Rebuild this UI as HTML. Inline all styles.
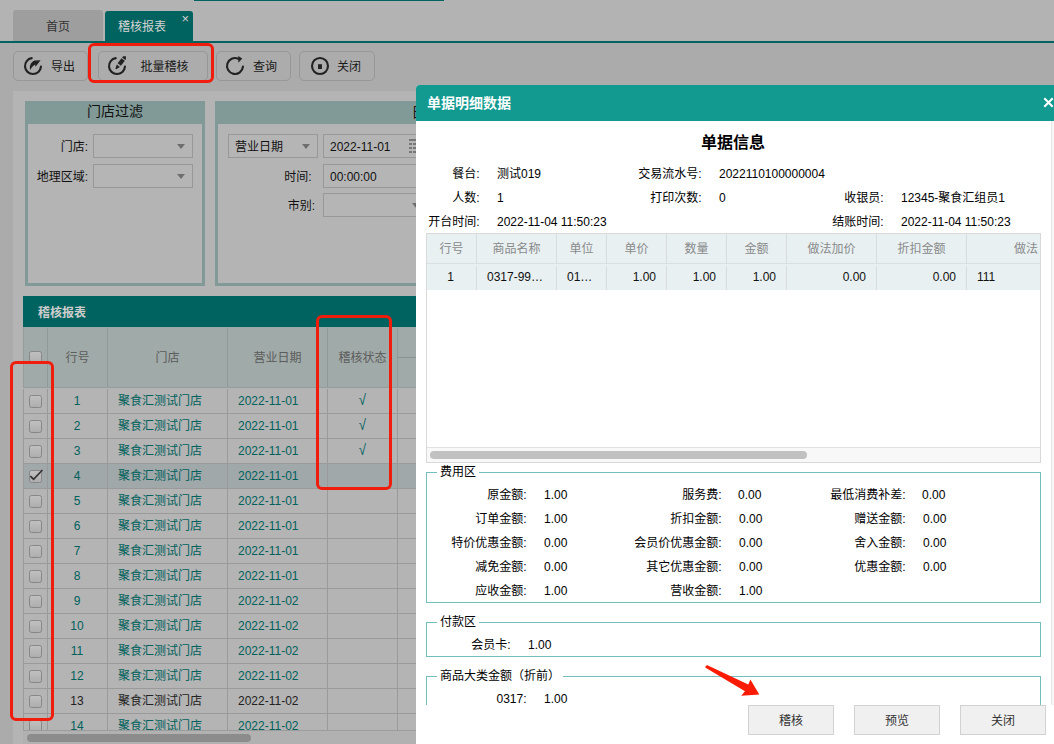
<!DOCTYPE html>
<html lang="zh-CN">
<head>
<meta charset="utf-8">
<title>稽核报表</title>
<style>
*{box-sizing:border-box;margin:0;padding:0}
html,body{width:1054px;height:744px;overflow:hidden}
body{position:relative;background:#ababab;font-family:"Liberation Sans","Noto Sans CJK SC",sans-serif;font-size:12px;color:#111;line-height:1}
.a{position:absolute}
.t{position:absolute;white-space:nowrap;line-height:16px;height:16px}
.r{text-align:right}
.c{text-align:center}
.tab{position:absolute;top:11px;height:31px;border-radius:3px 3px 0 0;text-align:center;line-height:32px;font-size:12px}
.btn{position:absolute;top:51px;height:30px;border:1px solid #979797;border-radius:5px;background:#acacac}
.btn span{position:absolute;top:7px;line-height:16px;font-size:12px;color:#1a1a1a;white-space:nowrap}
.btn svg{position:absolute;left:9px;top:3.85px}
.red{position:absolute;border:3px solid #f01d0c;border-radius:6px}
.sel{position:absolute;height:24px;border:1px solid #989898;background:#b5b5b5}
.sel i{position:absolute;right:7px;top:9px;width:0;height:0;border-left:4px solid transparent;border-right:4px solid transparent;border-top:5px solid #6e6e6e}
.fb{position:absolute;border:3px solid #819a97;background:#b4b4b4}
.fb .h{position:absolute;left:-3px;right:-3px;top:-3px;height:23px;background:#819a97;text-align:center;font-size:14px;line-height:21px;color:#111}
.row{position:absolute;left:23px;width:393px;height:25px;border-bottom:1px solid #9a9a9a;border-left:1px solid #9a9a9a;color:#00615c}
.row b{position:absolute;top:0;bottom:0;width:1px;background:#9a9a9a}
.row span{position:absolute;top:4px;line-height:16px;white-space:nowrap}
.cb{position:absolute;left:5px;top:6px;width:13px;height:13px;border:1px solid #878787;border-radius:2.5px;background:linear-gradient(#c0c0c0,#aeaeae)}
.ck{font-size:15px;transform:scaleX(.88)}
#dlg{position:absolute;left:416px;top:85px;width:638px;height:659px;background:#fff;border-radius:4px 0 0 0;overflow:hidden}
#dlg .hd{position:absolute;left:0;top:0;right:0;height:36px;background:#129990}
.k{color:#000}
.th{position:absolute;top:0;height:30px;border-right:1px solid #d8dcdd;color:#8a8a8a;line-height:30px;text-align:center}
.td{position:absolute;top:32px;height:24px;border-right:1px solid #d8dcdd;color:#111;line-height:23px}
.fs{position:absolute;left:426px;width:615px;border:1px solid #74bebc}
.lg{position:absolute;background:#fff;padding:0 3px;line-height:16px;height:16px;white-space:nowrap;color:#000}
.db{position:absolute;top:705px;width:86px;height:30px;border:1px solid #d2d2d2;background:#f0f0f0;text-align:center;line-height:30px;font-size:12px;color:#333}
</style>
</head>
<body>
<div class="a" style="left:0;top:0;width:1054px;height:42px;background:#b3b3b3"></div>
<div class="a" style="left:194px;top:0;width:249.5px;height:1.4px;background:#00635f"></div>
<div class="tab" style="left:13px;top:10px;height:32px;line-height:34px;width:90px;background:#9e9e9e;color:#333">首页</div>
<div class="tab" style="left:105px;width:88px;background:#00635f;color:#d4d4d4;padding-right:14px">稽核报表</div>
<div class="t" style="left:181.5px;top:11px;color:#d0d0d0;font-size:13px">×</div>
<div class="a" style="left:0;top:41px;width:1054px;height:2px;background:#00635f"></div>
<div class="btn" style="left:13px;width:75px"><svg width="20" height="20" viewBox="0 0 20 20"><path d="M8.75 2.1A8 8 0 1 0 17.97 10.67" fill="none" stroke="#222" stroke-width="2.1" stroke-linecap="round"/><path d="M7.2 14C6.2 10.2 7.6 6.2 11.5 4.4L17.6 4.3L12.5 10.8L12.2 8.4C10.2 9.4 8.4 11.4 7.2 14Z" fill="#222"/></svg><span style="left:37px">导出</span></div>
<div class="btn" style="left:97.5px;width:110px"><svg width="20" height="20" viewBox="0 0 20 20" style="left:8.5px"><defs><clipPath id="pc"><rect x="0" y="0.2" width="18.9" height="20"/></clipPath></defs><path d="M8.75 2.1A8 8 0 1 0 17.97 10.67" fill="none" stroke="#222" stroke-width="2.1" stroke-linecap="round"/><g clip-path="url(#pc)"><g transform="translate(8.9 12.8) rotate(-52)" fill="#222"><path d="M-0.2 -0.5L4 -2L4 2L-0.2 0.5Z"/><rect x="5.5" y="-2.1" width="6.3" height="4.2"/><rect x="12.8" y="-2.1" width="6" height="4.2"/></g></g></svg><span style="left:42px">批量稽核</span></div>
<div class="btn" style="left:215.5px;width:75.5px"><svg width="20" height="20" viewBox="0 0 20 20" style="left:8.5px"><path d="M13.25 2.69A8 8 0 1 0 17.97 10.67" fill="none" stroke="#222" stroke-width="2.1" stroke-linecap="round"/><path d="M13.2 0.1L17.3 2.6L13.4 6.7Z" fill="#222"/></svg><span style="left:36.5px">查询</span></div>
<div class="btn" style="left:299px;width:76px"><svg width="20" height="20" viewBox="0 0 20 20" style="left:10px"><circle cx="10" cy="10" r="8" fill="none" stroke="#222" stroke-width="2.1"/><rect x="8.05" y="8.2" width="3.9" height="4.8" fill="#222"/></svg><span style="left:37px">关闭</span></div>
<div class="red" style="left:88px;top:42.5px;width:126px;height:40.5px"></div>
<div class="a" style="left:13px;top:91px;width:1041px;height:653px;background:#b4b4b4"></div>
<div class="fb" style="left:25px;top:101px;width:180px;height:185px"><div class="h">门店过滤</div></div>
<div class="fb" style="left:215px;top:101px;width:400px;height:185px"><div class="h" style="text-align:left;padding-left:196.5px;line-height:22px">日</div></div>
<div class="t r" style="left:30px;width:58px;top:139px">门店:</div>
<div class="sel" style="left:93px;top:134px;width:100px"><i></i></div>
<div class="t r" style="left:30px;width:58px;top:169px">地理区域:</div>
<div class="sel" style="left:93px;top:164px;width:100px"><i></i></div>
<div class="sel" style="left:228px;top:134px;width:90px"><i style="right:7.5px"></i></div>
<div class="t" style="left:235px;top:139px">营业日期</div>
<div class="sel" style="left:323px;top:134px;width:100px"></div>
<div class="t" style="left:330px;top:139px">2022-11-01</div>
<svg class="a" style="left:409px;top:139px" width="12" height="14" viewBox="0 0 12 14"><g fill="#777"><rect x="0" y="0" width="12" height="2"/><rect x="0" y="4" width="3" height="2"/><rect x="4" y="4" width="3" height="2"/><rect x="8" y="4" width="3" height="2"/><rect x="0" y="8" width="3" height="2"/><rect x="4" y="8" width="3" height="2"/><rect x="8" y="8" width="3" height="2"/><rect x="0" y="12" width="3" height="2"/><rect x="4" y="12" width="3" height="2"/></g></svg>
<div class="t r" style="left:250px;width:61.5px;top:168.5px">时间:</div>
<div class="sel" style="left:323px;top:164px;width:100px"></div>
<div class="t" style="left:330px;top:169px">00:00:00</div>
<div class="t r" style="left:250px;width:65px;top:197.5px">市别:</div>
<div class="sel" style="left:323px;top:193px;width:106px"><i style="right:8.5px"></i></div>
<div class="a" style="left:23px;top:296px;width:400px;height:31px;background:#00635f"></div>
<div class="t" style="left:38px;top:304.5px;color:#cdcdcd;font-weight:bold">稽核报表</div>
<div class="a" style="left:23px;top:327px;width:400px;height:61px;background:#a0aaa8;border-bottom:1px solid #959c9b;border-left:1px solid #959c9b"></div>
<div class="a" style="left:47px;top:328px;width:1px;height:59px;background:#909a98"></div>
<div class="a" style="left:107px;top:328px;width:1px;height:59px;background:#909a98"></div>
<div class="a" style="left:227px;top:328px;width:1px;height:59px;background:#909a98"></div>
<div class="a" style="left:327px;top:328px;width:1px;height:59px;background:#909a98"></div>
<div class="a" style="left:397px;top:328px;width:1px;height:59px;background:#909a98"></div>
<div class="a" style="left:398px;top:357px;width:25px;height:1px;background:#8a9492"></div>
<div class="cb" style="left:29px;top:351px"></div>
<div class="t c" style="left:48px;width:59px;top:350px;color:#5c5c5c">行号</div>
<div class="t c" style="left:108px;width:119px;top:350px;color:#5c5c5c">门店</div>
<div class="t c" style="left:228px;width:99px;top:350px;color:#5c5c5c">营业日期</div>
<div class="t c" style="left:328px;width:69px;top:350px;color:#5c5c5c">稽核状态</div>
<div class="row" style="top:389px;"><div class="cb"></div><b style="left:23px"></b><b style="left:83px"></b><b style="left:203px"></b><b style="left:303px"></b><b style="left:373px"></b><span style="left:24px;width:58px;text-align:center">1</span><span style="left:94px">聚食汇测试门店</span><span style="left:214px">2022-11-01</span><span class="ck" style="top:3px;left:304px;width:69px;text-align:center">√</span></div>
<div class="row" style="top:414px;"><div class="cb"></div><b style="left:23px"></b><b style="left:83px"></b><b style="left:203px"></b><b style="left:303px"></b><b style="left:373px"></b><span style="left:24px;width:58px;text-align:center">2</span><span style="left:94px">聚食汇测试门店</span><span style="left:214px">2022-11-01</span><span class="ck" style="top:3px;left:304px;width:69px;text-align:center">√</span></div>
<div class="row" style="top:439px;"><div class="cb"></div><b style="left:23px"></b><b style="left:83px"></b><b style="left:203px"></b><b style="left:303px"></b><b style="left:373px"></b><span style="left:24px;width:58px;text-align:center">3</span><span style="left:94px">聚食汇测试门店</span><span style="left:214px">2022-11-01</span><span class="ck" style="top:3px;left:304px;width:69px;text-align:center">√</span></div>
<div class="row" style="top:464px;background:#a1a8aa;"><div class="cb"><svg style="position:absolute;left:0px;top:-2px" width="14" height="14" viewBox="0 0 14 14"><path d="M0.4 7.1L3.6 10.3L12.4 1" fill="none" stroke="#333" stroke-width="1.7"/></svg></div><b style="left:23px"></b><b style="left:83px"></b><b style="left:203px"></b><b style="left:303px"></b><b style="left:373px"></b><span style="left:24px;width:58px;text-align:center">4</span><span style="left:94px">聚食汇测试门店</span><span style="left:214px">2022-11-01</span></div>
<div class="row" style="top:489px;"><div class="cb"></div><b style="left:23px"></b><b style="left:83px"></b><b style="left:203px"></b><b style="left:303px"></b><b style="left:373px"></b><span style="left:24px;width:58px;text-align:center">5</span><span style="left:94px">聚食汇测试门店</span><span style="left:214px">2022-11-01</span></div>
<div class="row" style="top:514px;"><div class="cb"></div><b style="left:23px"></b><b style="left:83px"></b><b style="left:203px"></b><b style="left:303px"></b><b style="left:373px"></b><span style="left:24px;width:58px;text-align:center">6</span><span style="left:94px">聚食汇测试门店</span><span style="left:214px">2022-11-01</span></div>
<div class="row" style="top:539px;"><div class="cb"></div><b style="left:23px"></b><b style="left:83px"></b><b style="left:203px"></b><b style="left:303px"></b><b style="left:373px"></b><span style="left:24px;width:58px;text-align:center">7</span><span style="left:94px">聚食汇测试门店</span><span style="left:214px">2022-11-01</span></div>
<div class="row" style="top:564px;"><div class="cb"></div><b style="left:23px"></b><b style="left:83px"></b><b style="left:203px"></b><b style="left:303px"></b><b style="left:373px"></b><span style="left:24px;width:58px;text-align:center">8</span><span style="left:94px">聚食汇测试门店</span><span style="left:214px">2022-11-01</span></div>
<div class="row" style="top:589px;"><div class="cb"></div><b style="left:23px"></b><b style="left:83px"></b><b style="left:203px"></b><b style="left:303px"></b><b style="left:373px"></b><span style="left:24px;width:58px;text-align:center">9</span><span style="left:94px">聚食汇测试门店</span><span style="left:214px">2022-11-02</span></div>
<div class="row" style="top:614px;"><div class="cb"></div><b style="left:23px"></b><b style="left:83px"></b><b style="left:203px"></b><b style="left:303px"></b><b style="left:373px"></b><span style="left:24px;width:58px;text-align:center">10</span><span style="left:94px">聚食汇测试门店</span><span style="left:214px">2022-11-02</span></div>
<div class="row" style="top:639px;"><div class="cb"></div><b style="left:23px"></b><b style="left:83px"></b><b style="left:203px"></b><b style="left:303px"></b><b style="left:373px"></b><span style="left:24px;width:58px;text-align:center">11</span><span style="left:94px">聚食汇测试门店</span><span style="left:214px">2022-11-02</span></div>
<div class="row" style="top:664px;"><div class="cb"></div><b style="left:23px"></b><b style="left:83px"></b><b style="left:203px"></b><b style="left:303px"></b><b style="left:373px"></b><span style="left:24px;width:58px;text-align:center">12</span><span style="left:94px">聚食汇测试门店</span><span style="left:214px">2022-11-02</span></div>
<div class="row" style="top:689px;color:#222;"><div class="cb"></div><b style="left:23px"></b><b style="left:83px"></b><b style="left:203px"></b><b style="left:303px"></b><b style="left:373px"></b><span style="left:24px;width:58px;text-align:center">13</span><span style="left:94px">聚食汇测试门店</span><span style="left:214px">2022-11-02</span></div>
<div class="row" style="top:714px;"><div class="cb"></div><b style="left:23px"></b><b style="left:83px"></b><b style="left:203px"></b><b style="left:303px"></b><b style="left:373px"></b><span style="left:24px;width:58px;text-align:center">14</span><span style="left:94px">聚食汇测试门店</span><span style="left:214px">2022-11-02</span></div>
<div class="a" style="left:23px;top:730px;width:400px;height:14px;background:#b1b1b1;border-top:1px solid #9c9c9c"></div>
<div class="a" style="left:27px;top:734px;width:224px;height:8px;border-radius:4px;background:#8c8c8c"></div>
<div class="red" style="left:10.3px;top:361px;width:43.6px;height:360px"></div>
<div class="red" style="left:316.2px;top:314.5px;width:76px;height:175.5px"></div>
<div id="dlg"><div class="hd"></div></div>
<div class="t" style="left:427px;top:95px;font-size:14px;font-weight:bold;color:#fff">单据明细数据</div>
<svg class="a" style="left:1043px;top:97px" width="11" height="11" viewBox="0 0 11 11"><path d="M1.3 1.3L9.7 9.7M9.7 1.3L1.3 9.7" stroke="#fff" stroke-width="2.1" fill="none"/></svg>
<div class="a" style="left:1051px;top:121px;width:3px;height:584px;background:#f6f6f6;border-left:1px solid #e6e6e6"></div>
<div class="t c k" style="left:633px;width:200px;top:133px;height:20px;line-height:20px;font-size:16px;font-weight:bold">单据信息</div>
<div class="t r k" style="left:349.5px;width:130px;top:165.5px">餐台:</div>
<div class="t k" style="left:497px;top:165.5px">测试019</div>
<div class="t r k" style="left:571.5px;width:130px;top:165.5px">交易流水号:</div>
<div class="t k" style="left:719px;top:165.5px">2022110100000004</div>
<div class="t r k" style="left:349.5px;width:130px;top:189.5px">人数:</div>
<div class="t k" style="left:497px;top:189.5px">1</div>
<div class="t r k" style="left:571.5px;width:130px;top:189.5px">打印次数:</div>
<div class="t k" style="left:719px;top:189.5px">0</div>
<div class="t r k" style="left:753.5px;width:130px;top:189.5px">收银员:</div>
<div class="t k" style="left:901px;top:189.5px">12345-聚食汇组员1</div>
<div class="t r k" style="left:349.5px;width:130px;top:213.5px">开台时间:</div>
<div class="t k" style="left:497px;top:213.5px">2022-11-04 11:50:23</div>
<div class="t r k" style="left:753.5px;width:130px;top:213.5px">结账时间:</div>
<div class="t k" style="left:901px;top:213.5px">2022-11-04 11:50:23</div>
<div class="a" style="left:426px;top:233px;width:615px;height:230px;border:1px solid #d9d9d9;overflow:hidden"><div class="a" style="left:0;top:0;width:613px;height:30px;background:#e8f0f2;border-bottom:1px solid #dcdfe0"></div><div class="a" style="left:0;top:30px;width:613px;height:26px;background:#e8f0f2"></div><div class="th" style="left:0px;width:50px">行号</div><div class="td" style="left:0px;width:50px;text-align:center;padding-right:2px">1</div><div class="th" style="left:50px;width:80px">商品名称</div><div class="td" style="left:50px;width:80px;text-align:left;padding-left:10px">0317-99…</div><div class="th" style="left:130px;width:50px">单位</div><div class="td" style="left:130px;width:50px;text-align:left;padding-left:10px">01…</div><div class="th" style="left:180px;width:60px">单价</div><div class="td" style="left:180px;width:60px;text-align:right;padding-right:10px">1.00</div><div class="th" style="left:240px;width:60px">数量</div><div class="td" style="left:240px;width:60px;text-align:right;padding-right:10px">1.00</div><div class="th" style="left:300px;width:60px">金额</div><div class="td" style="left:300px;width:60px;text-align:right;padding-right:10px">1.00</div><div class="th" style="left:360px;width:90px">做法加价</div><div class="td" style="left:360px;width:90px;text-align:right;padding-right:10px">0.00</div><div class="th" style="left:450px;width:90px">折扣金额</div><div class="td" style="left:450px;width:90px;text-align:right;padding-right:10px">0.00</div><div class="th" style="left:540px;width:74px;border-right:0;text-align:right;padding-right:3px">做法</div><div class="td" style="left:540px;width:74px;border-right:0;text-align:left;padding-left:10px">111</div><div class="a" style="left:0;top:213px;width:613px;height:15px;background:#f8f8f8;border-top:1px solid #e2e2e2"></div><div class="a" style="left:3px;top:217px;width:377px;height:8px;border-radius:4px;background:#c1c1c1"></div></div>
<div class="fs" style="top:472px;height:131px"></div><div class="lg" style="left:437px;top:464px">费用区</div>
<div class="t r k" style="left:396.5px;width:130px;top:487px">原金额:</div>
<div class="t k" style="left:544px;top:487px">1.00</div>
<div class="t r k" style="left:591.5px;width:130px;top:487px">服务费:</div>
<div class="t k" style="left:738px;top:487px">0.00</div>
<div class="t r k" style="left:775.5px;width:130px;top:487px">最低消费补差:</div>
<div class="t k" style="left:922px;top:487px">0.00</div>
<div class="t r k" style="left:396.5px;width:130px;top:511px">订单金额:</div>
<div class="t k" style="left:544px;top:511px">1.00</div>
<div class="t r k" style="left:591.5px;width:130px;top:511px">折扣金额:</div>
<div class="t k" style="left:739px;top:511px">0.00</div>
<div class="t r k" style="left:775.5px;width:130px;top:511px">赠送金额:</div>
<div class="t k" style="left:923px;top:511px">0.00</div>
<div class="t r k" style="left:396.5px;width:130px;top:535px">特价优惠金额:</div>
<div class="t k" style="left:544px;top:535px">0.00</div>
<div class="t r k" style="left:591.5px;width:130px;top:535px">会员价优惠金额:</div>
<div class="t k" style="left:739px;top:535px">0.00</div>
<div class="t r k" style="left:775.5px;width:130px;top:535px">舍入金额:</div>
<div class="t k" style="left:923px;top:535px">0.00</div>
<div class="t r k" style="left:396.5px;width:130px;top:559px">减免金额:</div>
<div class="t k" style="left:544px;top:559px">0.00</div>
<div class="t r k" style="left:591.5px;width:130px;top:559px">其它优惠金额:</div>
<div class="t k" style="left:739px;top:559px">0.00</div>
<div class="t r k" style="left:775.5px;width:130px;top:559px">优惠金额:</div>
<div class="t k" style="left:923px;top:559px">0.00</div>
<div class="t r k" style="left:396.5px;width:130px;top:583px">应收金额:</div>
<div class="t k" style="left:544px;top:583px">1.00</div>
<div class="t r k" style="left:591.5px;width:130px;top:583px">营收金额:</div>
<div class="t k" style="left:739px;top:583px">1.00</div>
<div class="fs" style="top:622px;height:35px"></div><div class="lg" style="left:437px;top:614px">付款区</div>
<div class="t r k" style="left:380.5px;width:130px;top:637px">会员卡:</div>
<div class="t k" style="left:528px;top:637px">1.00</div>
<div class="fs" style="top:676px;height:29px;border-bottom:0"></div><div class="lg" style="left:437px;top:668px">商品大类金额（折前）</div>
<div class="t r k" style="left:396.5px;width:130px;top:691px">0317:</div>
<div class="t k" style="left:544px;top:691px">1.00</div>
<div class="a" style="left:416px;top:705px;width:638px;height:39px;background:#fff"></div>
<div class="db" style="left:748px">稽核</div>
<div class="db" style="left:854px">预览</div>
<div class="db" style="left:960px">关闭</div>
<svg class="a" style="left:700px;top:660px" width="70" height="44" viewBox="700 660 70 44"><path d="M705.2 667.4Q705.6 665 707.4 665.2L748.3 684.6L750.4 679.4L759.3 694.6L741.2 695.8L745 691.3Z" fill="#fb1a04"/></svg>
</body>
</html>
